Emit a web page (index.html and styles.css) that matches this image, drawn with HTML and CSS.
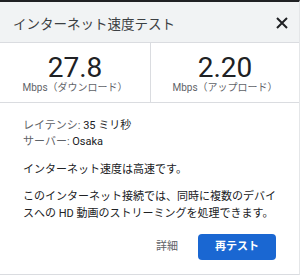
FILE: index.html
```html
<!DOCTYPE html>
<html lang="ja">
<head>
<meta charset="utf-8">
<link rel="stylesheet" href="styles.css">
</head>
<body>
<div class="dialog">
  <div class="header">
    <div class="title">インターネット速度テスト</div>
    <svg class="close" width="12" height="12" viewBox="0 0 12 12"><path d="M1 1 L11 11 M11 1 L1 11" stroke="#202124" stroke-width="2" fill="none"/></svg>
  </div>
  <div class="stats">
    <div class="stat">
      <div class="num">27.8</div>
      <div class="unit">Mbps（ダウンロード）</div>
    </div>
    <div class="stat">
      <div class="num">2.20</div>
      <div class="unit">Mbps（アップロード）</div>
    </div>
  </div>
  <div class="body">
    <p class="info"><span class="lbl">レイテンシ:</span> 35 ミリ秒<br><span class="lbl">サーバー:</span> Osaka</p>
    <p class="p2">インターネット速度は高速です。</p>
    <p class="p3">このインターネット接続では、同時に複数のデバイスへの HD 動画のストリーミングを処理できます。</p>
    <div class="actions">
      <span class="detail">詳細</span>
      <span class="retest">再テスト</span>
    </div>
  </div>
</div>
</body>
</html>
```
FILE: styles.css
```css
html, body {
  margin: 0;
  padding: 0;
  background: #ffffff;
}
body {
  width: 300px;
  height: 279px;
  font-family: "Roboto", "Noto Sans CJK JP", sans-serif;
  color: #202124;
}
.dialog {
  border-top: 2px solid #202124;
  border-bottom: 1px solid #dadce0;
  border-right: 1px solid #e4e6e8;
  box-sizing: border-box;
  height: 275px;
  display: flex;
  flex-direction: column;
}
.header {
  height: 40px;
  background: #f1f3f4;
  border-bottom: 1px solid #dadce0;
  display: flex;
  align-items: center;
  justify-content: space-between;
  padding: 0 11px 0 13px;
}
.title {
  font-size: 13.5px;
  line-height: 20px;
  color: #3c4043;
  padding-top: 4px;
}
.close {
  margin-top: 2px;
}
.stats {
  display: grid;
  grid-template-columns: 151px 1fr;
  height: 59px;
  border-bottom: 1px solid #dadce0;
}
.stat {
  display: flex;
  flex-direction: column;
  align-items: center;
  padding-top: 11px;
}
.stat:first-child {
  border-right: 1px solid #dadce0;
}
.num {
  font-size: 28px;
  line-height: 28px;
  color: #202124;
}
.unit {
  font-size: 10px;
  line-height: 11px;
  color: #5f6368;
}
.body {
  flex: 1;
  padding: 15px 23px 0 23px;
  font-size: 11px;
  line-height: 16px;
}
.body p {
  margin: 0;
}
.lbl {
  color: #5f6368;
}
.p2 {
  margin-top: 12px !important;
}
.p3 {
  margin-top: 10px !important;
  line-height: 17px;
}
.actions {
  margin-top: 12px;
  display: flex;
  justify-content: flex-end;
  align-items: center;
  gap: 20px;
}
.detail {
  color: #5f6368;
  font-size: 11px;
}
.retest {
  width: 78px;
  height: 26px;
  box-sizing: border-box;
  background: #1a67d2;
  color: #ffffff;
  border-radius: 4px;
  display: flex;
  align-items: center;
  justify-content: center;
  font-size: 11px;
  font-weight: 700;
}
```
